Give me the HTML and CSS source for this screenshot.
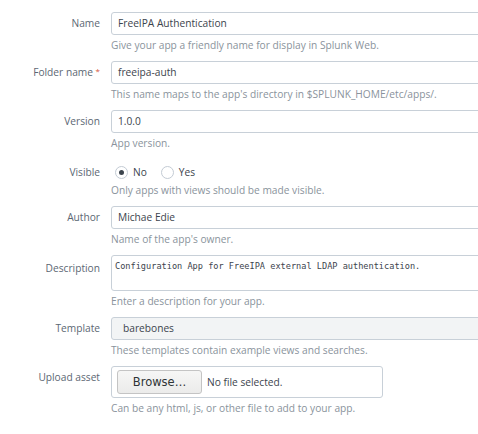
FILE: index.html
```html
<!DOCTYPE html>
<html>
<head>
<meta charset="utf-8">
<link rel="stylesheet" href="styles.css">
</head>
<body>
<form class="form">
  <div class="row">
    <label class="label">Name</label>
    <div class="ctrl">
      <div class="input">FreeIPA Authentication</div>
      <div class="help">Give your app a friendly name for display in Splunk Web.</div>
    </div>
  </div>
  <div class="row">
    <label class="label">Folder name <span class="req">*</span></label>
    <div class="ctrl">
      <div class="input">freeipa-auth</div>
      <div class="help">This name maps to the app's directory in $SPLUNK_HOME/etc/apps/.</div>
    </div>
  </div>
  <div class="row">
    <label class="label">Version</label>
    <div class="ctrl">
      <div class="input">1.0.0</div>
      <div class="help">App version.</div>
    </div>
  </div>
  <div class="row">
    <label class="label label-radio">Visible</label>
    <div class="ctrl">
      <div class="radios">
        <span class="radio checked"></span><span class="rtext">No</span>
        <span class="radio"></span><span class="rtext">Yes</span>
      </div>
      <div class="help">Only apps with views should be made visible.</div>
    </div>
  </div>
  <div class="row">
    <label class="label">Author</label>
    <div class="ctrl">
      <div class="input">Michae Edie</div>
      <div class="help">Name of the app's owner.</div>
    </div>
  </div>
  <div class="row">
    <label class="label label-desc">Description</label>
    <div class="ctrl">
      <div class="input textarea">Configuration App for FreeIPA external LDAP authentication.</div>
      <div class="help">Enter a description for your app.</div>
    </div>
  </div>
  <div class="row">
    <label class="label">Template</label>
    <div class="ctrl">
      <div class="input select">barebones</div>
      <div class="help">These templates contain example views and searches.</div>
    </div>
  </div>
  <div class="row">
    <label class="label label-upload">Upload asset</label>
    <div class="ctrl">
      <div class="file"><span class="browse">Browse…</span><span class="nofile">No file selected.</span></div>
      <div class="help">Can be any html, js, or other file to add to your app.</div>
    </div>
  </div>
</form>
</body>
</html>
```
FILE: styles.css
```css
html, body {
  margin: 0;
  padding: 0;
  background: #fff;
  overflow: hidden;
}
body {
  font-family: "Open Sans", "Lato", sans-serif;
  font-size: 10.2px;
  color: #3c444d;
}
.form {
  padding-top: 12px;
  display: flex;
  flex-direction: column;
  gap: 8px;
}
.row {
  display: grid;
  grid-template-columns: 100px 500px;
  column-gap: 11px;
}
.label {
  text-align: right;
  color: #5c6773;
  line-height: 23px;
  white-space: nowrap;
}
.req {
  color: #d6563c;
  font-size: 8px;
  vertical-align: top;
  line-height: 19px;
}
.input {
  box-sizing: border-box;
  height: 23px;
  border: 1px solid #c8d0d8;
  border-radius: 3px;
  padding: 0 6px;
  line-height: 21px;
  color: #3c444d;
  background: #fff;
}
.textarea {
  height: 36px;
  font-family: "DejaVu Sans Mono", monospace;
  font-size: 8.6px;
  line-height: 20px;
  padding: 0 3px;
}
.select {
  background: #f2f4f5;
  padding-left: 11px;
}
.help {
  color: #8a939c;
  line-height: 16px;
  margin-top: 2px;
}
.label-radio {
  line-height: 21px;
  padding-top: 3px;
}
.radios {
  height: 21px;
  display: flex;
  align-items: flex-end;
  padding-left: 4px;
  box-sizing: border-box;
  padding-bottom: 1px;
}
.radios > span {
  display: block;
}
.radio {
  box-sizing: border-box;
  width: 13px;
  height: 13px;
  border: 1px solid #c3cbd4;
  border-radius: 50%;
  position: relative;
  background: #fff;
}
.radio.checked::after {
  content: "";
  position: absolute;
  left: 3px;
  top: 3px;
  width: 5px;
  height: 5px;
  border-radius: 50%;
  background: #3c444d;
}
.rtext {
  margin-left: 5px;
  margin-right: 14px;
  line-height: 13px;
}
.label-desc {
  line-height: 26px;
}
.label-upload {
  line-height: 23px;
}
.file {
  box-sizing: border-box;
  width: 272px;
  height: 32px;
  border: 1px solid #c8d0d8;
  border-radius: 3px;
  display: flex;
  align-items: center;
  padding-left: 5px;
}
.browse {
  box-sizing: border-box;
  width: 85px;
  height: 24px;
  border: 1px solid #c4c4c4;
  border-radius: 3px;
  background: linear-gradient(#f6f6f5, #ebebea);
  font-family: "DejaVu Sans", sans-serif;
  font-size: 11.5px;
  color: #2e3436;
  display: flex;
  align-items: center;
  justify-content: center;
}
.nofile {
  margin-left: 5px;
  color: #3c444d;
}
```
